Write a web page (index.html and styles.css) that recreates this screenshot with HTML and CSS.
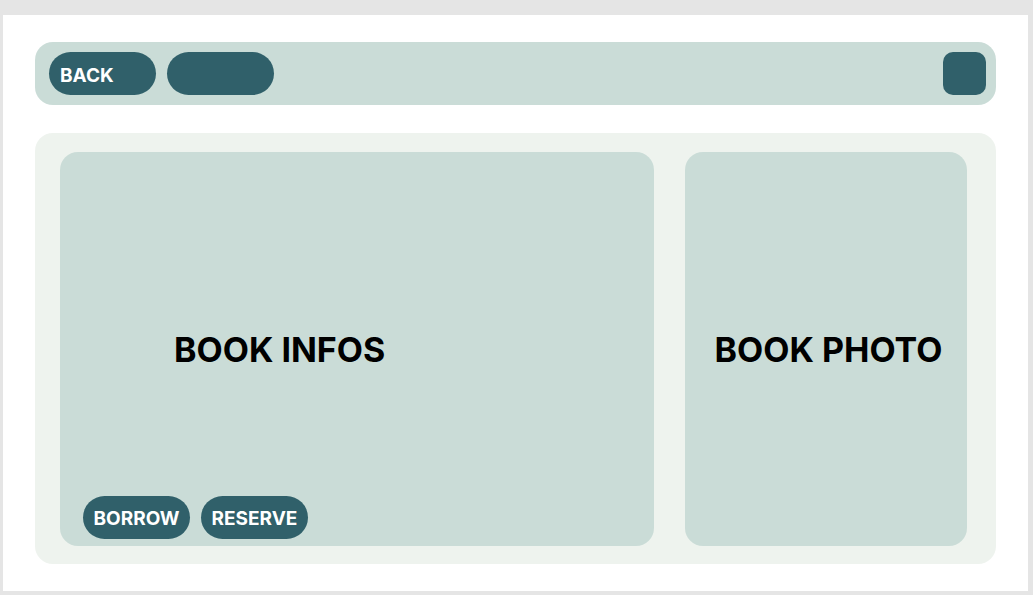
FILE: index.html
```html
<!DOCTYPE html>
<html>
<head>
<meta charset="utf-8">
<link rel="stylesheet" href="styles.css">
</head>
<body>
<div class="frame">
  <div class="topbar">
    <button class="pill">BACK</button>
    <button class="pill"></button>
    <div class="spacer"></div>
    <button class="square"></button>
  </div>
  <div class="panel">
    <div class="card info">
      <div class="title info-title">BOOK INFOS</div>
      <div class="actions">
        <button class="pill small">BORROW</button>
        <button class="pill small">RESERVE</button>
      </div>
    </div>
    <div class="card photo">
      <div class="title">BOOK PHOTO</div>
    </div>
  </div>
</div>
</body>
</html>
```
FILE: styles.css
```css
* { box-sizing: border-box; }
html, body { margin: 0; padding: 0; }
body {
  background: #e5e5e5;
  font-family: Inter, "Noto Sans", sans-serif;
  width: 1033px;
  height: 595px;
  overflow: hidden;
}
.frame {
  margin: 15px 5px 0 3px;
  height: 576px;
  background: #ffffff;
  padding: 27px 32px 27px 32px;
  display: flex;
  flex-direction: column;
  gap: 28px;
}
.topbar {
  height: 63px;
  background: #cadcd7;
  border-radius: 18px;
  padding: 10px 10px 10px 14px;
  display: flex;
  align-items: center;
  gap: 11px;
}
.spacer { flex: 1; }
.pill {
  width: 107px;
  height: 43px;
  border: none;
  border-radius: 22px;
  background: #30606a;
  color: #ffffff;
  font-family: Inter, "Noto Sans", sans-serif;
  font-weight: 700;
  font-size: 19px;
  text-align: left;
  padding: 3px 0 0 11px;
  margin: 0;
}
.square {
  width: 43px;
  height: 43px;
  border: none;
  border-radius: 10px;
  background: #30606a;
  padding: 0;
  margin: 0;
}
.panel {
  flex: 1;
  background: #eef3ee;
  border-radius: 18px;
  padding: 19px 29px 18px 25px;
  display: flex;
  gap: 31px;
}
.card {
  background: #cadcd7;
  border-radius: 18px;
  display: grid;
  grid-template-areas: "a";
}
.info { width: 594px; padding: 0 0 7px 23px; }
.photo { width: 282px; align-items: center; justify-items: center; }
.title {
  grid-area: a;
  align-self: center;
  font-weight: 700;
  font-size: 34px;
  color: #000000;
  letter-spacing: 0;
}
.photo .title { padding: 0 0 0 5px; }
.info-title { justify-self: start; margin: 7px 0 0 91px; }
.actions {
  grid-area: a;
  align-self: end;
  display: flex;
  gap: 11px;
}
.pill.small {
  text-align: center;
  padding: 1px 0 0 0;
  font-size: 19px;
}
```
